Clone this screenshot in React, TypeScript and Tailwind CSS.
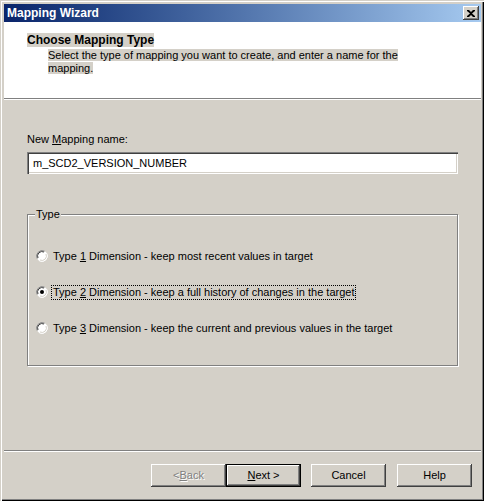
import React from "react";

const font = { fontFamily: '"Liberation Sans", Arial, sans-serif' };

function Radio({ checked }: { checked?: boolean }) {
  return (
    <svg width="12" height="12" viewBox="0 0 12 12" className="shrink-0">
      <circle cx="6" cy="6" r="5.5" fill="#ffffff" />
      <path d="M1.2 8.6 A5.5 5.5 0 0 1 8.6 1.2" fill="none" stroke="#808080" strokeWidth="1" />
      <path d="M2 8 A4.5 4.5 0 0 1 8 2" fill="none" stroke="#404040" strokeWidth="1" />
      <path d="M3.4 10.8 A5.5 5.5 0 0 0 10.8 3.4" fill="none" stroke="#ffffff" strokeWidth="1" />
      <path d="M4 10 A4.5 4.5 0 0 0 10 4" fill="none" stroke="#d4d0c8" strokeWidth="1" />
      {checked && <circle cx="6" cy="6" r="2" fill="#000000" />}
    </svg>
  );
}

function Btn({ children, def, disabled }: { children: React.ReactNode; def?: boolean; disabled?: boolean }) {
  if (def) {
    return (
      <div className="w-[75px] h-[23px] border border-black">
        <div className="w-full h-full flex items-center justify-center bg-[#d4d0c8] shadow-[inset_-1px_-1px_0_#404040,inset_1px_1px_0_#ffffff,inset_-2px_-2px_0_#808080] text-[11px] text-black">
          {children}
        </div>
      </div>
    );
  }
  return (
    <div
      className={
        "w-[75px] h-[23px] flex items-center justify-center bg-[#d4d0c8] shadow-[inset_-1px_-1px_0_#404040,inset_1px_1px_0_#ffffff,inset_-2px_-2px_0_#808080] text-[11px] " +
        (disabled ? "text-[#808080] [text-shadow:1px_1px_0_#ffffff]" : "text-black")
      }
    >
      {children}
    </div>
  );
}

export default function App() {
  return (
    <div style={font} className="w-[484px] h-[501px] bg-[#d4d0c8] text-black text-[11px] leading-[13px] shadow-[inset_1px_1px_0_#d4d0c8,inset_2px_2px_0_#ffffff,inset_-1px_-1px_0_#000000,inset_-2px_-2px_0_#808080] p-[4px] pb-[3px] pr-[3px] flex flex-col">
      {/* Title bar */}
      <div className="h-[18px] flex items-center justify-between pl-[3px] pr-[2px] bg-gradient-to-r from-[#0a246a] to-[#a6caf0]">
        <span className="text-white font-bold text-[12px]">Mapping Wizard</span>
        <div className="w-[16px] h-[14px] bg-[#d4d0c8] shadow-[inset_-1px_-1px_0_#404040,inset_1px_1px_0_#ffffff,inset_-2px_-2px_0_#808080] flex items-center justify-center">
          <svg width="8" height="7" viewBox="0 0 8 7">
            <path d="M0 0h2l2 2 2-2h2v1L5 3.5 8 6v1H6L4 5 2 7H0V6l3-2.5L0 1z" fill="#000" />
          </svg>
        </div>
      </div>

      {/* Header */}
      <div className="h-[76px] bg-white pt-[12px] pl-[23px]">
        <div>
          <span className="bg-[#d4d0c8] font-bold text-[12px] leading-[13px]">Choose Mapping Type</span>
        </div>
        <div className="pl-[21px] pt-[2px] w-[404px]">
          <span className="bg-[#d4d0c8] leading-[13px]">
            Select the type of mapping you want to create, and enter a name for the mapping.
          </span>
        </div>
      </div>
      <div className="h-[2px] border-t border-[#808080] border-b border-b-white" />

      {/* Body */}
      <div className="h-[350px] px-[23px] pt-[33px] flex flex-col">
        <div>
          New <u>M</u>apping name:
        </div>
        <div className="mt-[6px] h-[22px] w-[431px] bg-white shadow-[inset_1px_1px_0_#808080,inset_2px_2px_0_#404040,inset_-1px_-1px_0_#ffffff,inset_-2px_-2px_0_#d4d0c8] flex items-center pl-[6px]">
          m_SCD2_VERSION_NUMBER
        </div>

        <div className="relative mt-[40px] h-[152px] w-[431px] border border-[#808080] shadow-[inset_1px_1px_0_#ffffff,1px_1px_0_#ffffff]">
          <span className="absolute -top-[7px] left-[7px] px-[1px] bg-[#d4d0c8]">Type</span>
          <div className="flex flex-col pl-[8px] pt-[33px] gap-[20px]">
            <div className="flex items-center h-[16px] gap-[4px]">
              <Radio />
              <span className="px-[1px]">Type <u>1</u> Dimension - keep most recent values in target</span>
            </div>
            <div className="flex items-center h-[16px] gap-[4px]">
              <Radio checked />
              <span className="px-[1px] outline outline-1 outline-dotted outline-black">
                Type <u>2</u> Dimension - keep a full history of changes in the target
              </span>
            </div>
            <div className="flex items-center h-[16px] gap-[4px]">
              <Radio />
              <span className="px-[1px]">Type <u>3</u> Dimension - keep the current and previous values in the target</span>
            </div>
          </div>
        </div>
      </div>
      <div className="h-[2px] border-t border-[#808080] border-b border-b-white" />

      {/* Footer */}
      <div className="flex justify-end pr-[9px] pt-[12px]">
        <Btn disabled>
          &lt; <u>B</u>ack
        </Btn>
        <Btn def>
          <u>N</u>ext &gt;
        </Btn>
        <div className="w-[10px]" />
        <Btn>Cancel</Btn>
        <div className="w-[11px]" />
        <Btn>Help</Btn>
      </div>
    </div>
  );
}
